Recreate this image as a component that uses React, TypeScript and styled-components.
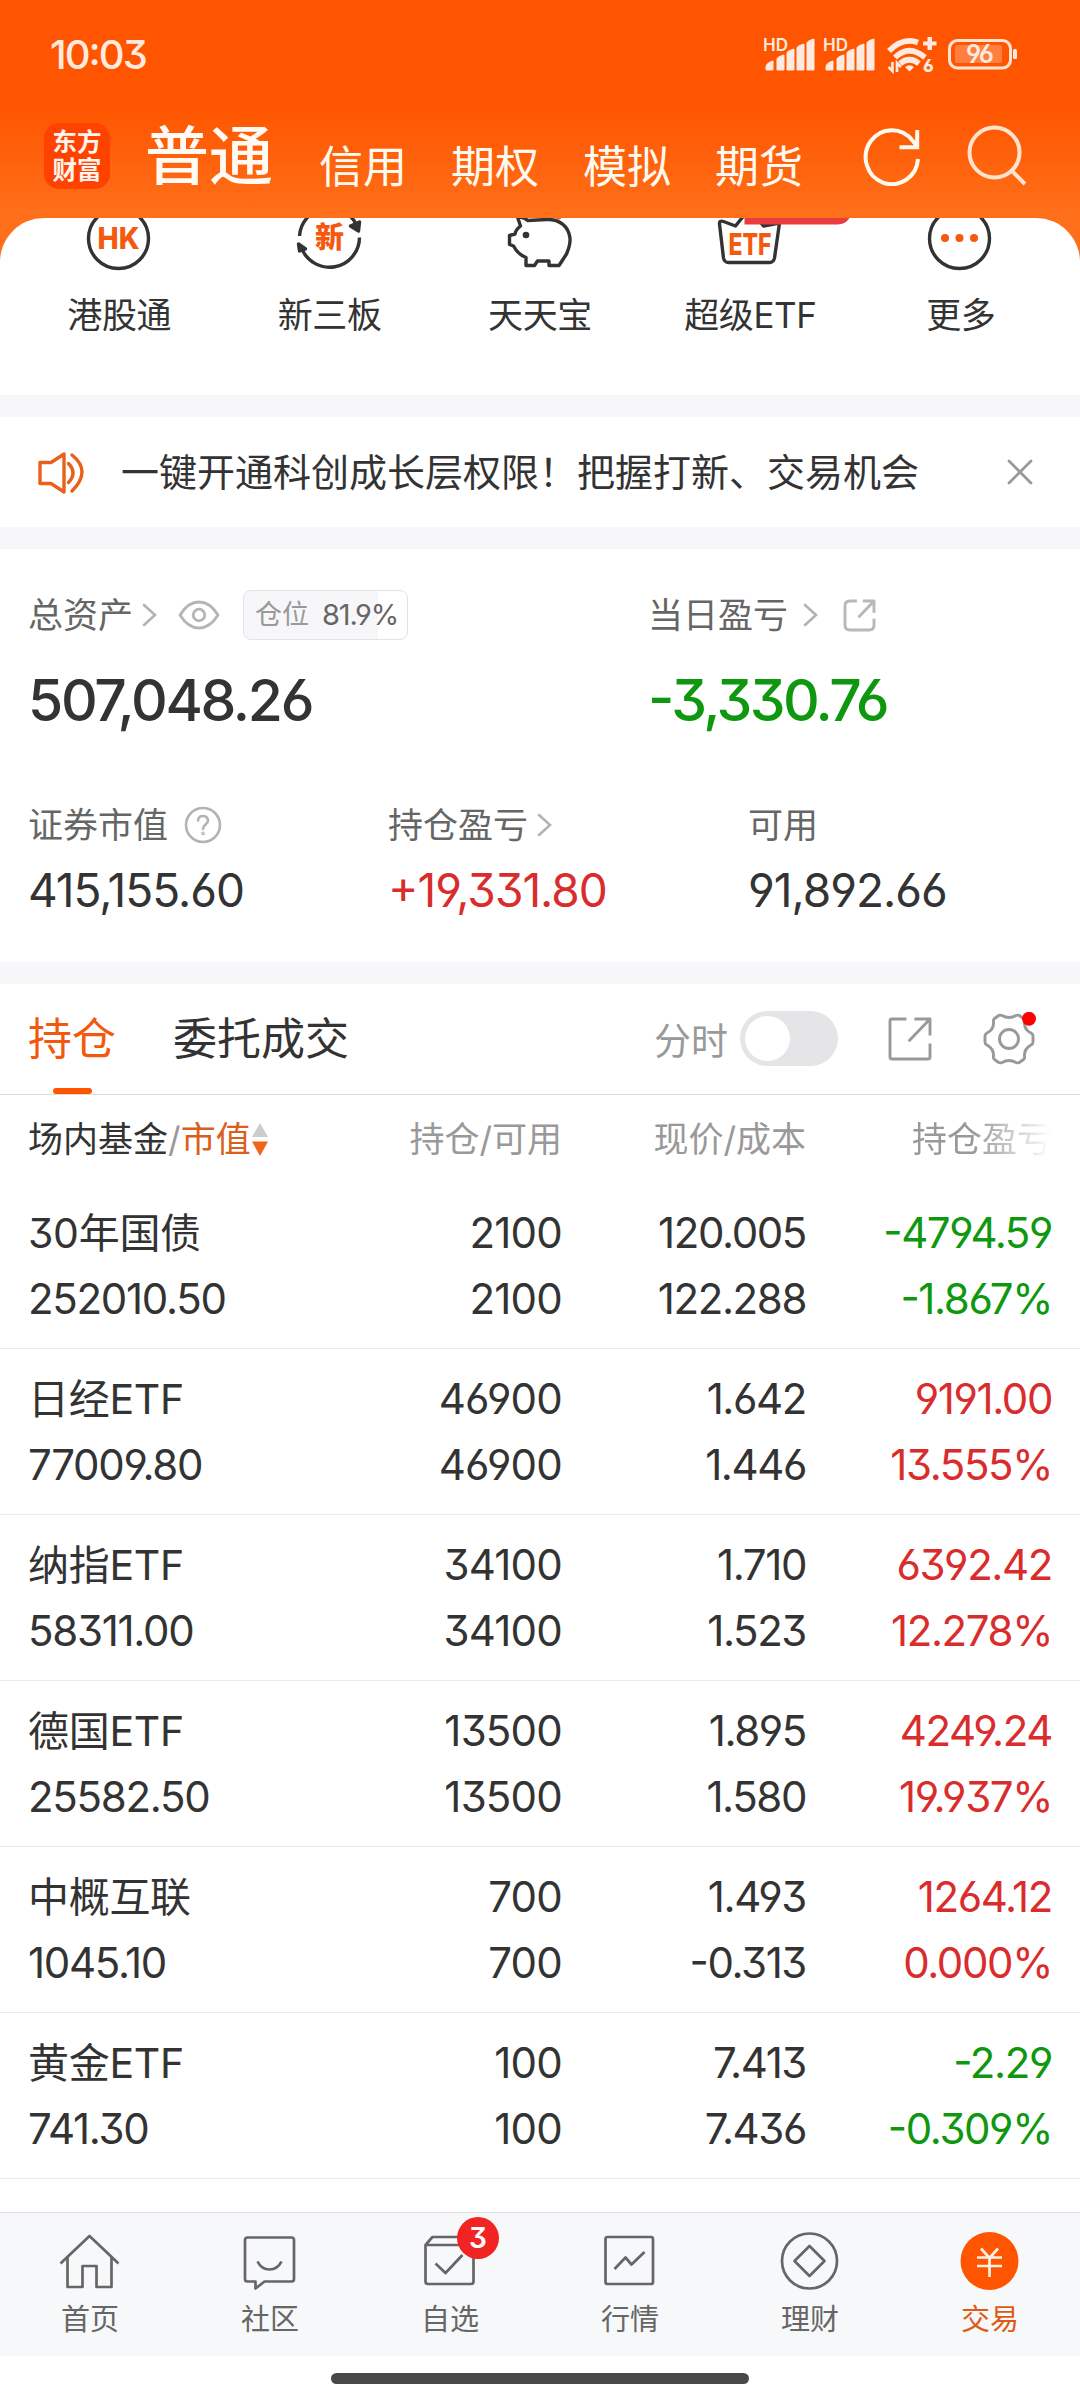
import React from "react";
import styled, { createGlobalStyle } from "styled-components";

const GlobalStyle = createGlobalStyle`
  * { box-sizing: border-box; }
  body {
    margin: 0;
    background: #fff;
    color: #333;
    font-family: "Inter", "Noto Sans CJK SC", sans-serif;
    font-feature-settings: "cv03", "cv04", "cv09", "case";
  }
`;

const Screen = styled.div`
  width: 1080px;
  height: 2400px;
  display: flex;
  flex-direction: column;
  overflow: hidden;
  background: #fff;
`;

const Top = styled.header`
  height: 262px;
  flex: none;
  background: linear-gradient(#ff5500 0, #ff5500 105px, #ff6f19 216px, #ff6f19 262px);
`;

const StatusBar = styled.div`
  height: 109px;
  padding: 0 60px 0 50px;
  display: flex;
  align-items: center;
  justify-content: space-between;
`;

const Clock = styled.span`
  color: #ffeadf;
  font-size: 40px;
  font-weight: 500;
  line-height: 50px;
  letter-spacing: -1.9px;
`;

const HeaderRow = styled.div`
  height: 109px;
  padding: 0 53px 17px 44px;
  display: flex;
  align-items: center;
`;

const Logo = styled.div`
  width: 66px;
  height: 66px;
  margin-top: 2px;
  border-radius: 15px;
  background: #ff4200;
  color: #fff4ee;
  font-size: 24.5px;
  font-weight: 700;
  line-height: 28px;
  text-align: center;
  padding-top: 5px;
`;

const ActiveMode = styled.div`
  margin: 1px 0 0 35px;
  width: 131px;
  color: #fffaf3;
  font-size: 64px;
  font-weight: 500;
  line-height: 70px;
`;

const Modes = styled.nav`
  margin: 24px 0 0 43px;
  display: flex;
  gap: 44px;
`;

const Mode = styled.span`
  color: #fffaf0;
  font-size: 44px;
  line-height: 50px;
`;

const HeaderIcons = styled.div`
  margin-left: auto;
  display: flex;
  gap: 45px;
`;

const Shortcuts = styled.section`
  height: 177px;
  margin-top: -44px;
  flex: none;
  padding: 0 14px;
  border-radius: 44px 44px 0 0;
  background: #fff;
  overflow: hidden;
  display: grid;
  grid-template-columns: repeat(5, 1fr);
`;

const Shortcut = styled.div`
  display: flex;
  flex-direction: column;
  align-items: center;
`;

const ShortcutLabel = styled.span`
  margin-top: 12px;
  font-size: 35px;
  line-height: 50px;
  letter-spacing: -0.4px;
  white-space: nowrap;
`;

const Gap = styled.div`
  height: 22px;
  flex: none;
  background: #f7f7fa;
`;

const Notice = styled.section`
  height: 110px;
  flex: none;
  padding: 0 46px 0 36px;
  display: flex;
  align-items: center;
`;

const NoticeText = styled.span`
  margin-left: 35px;
  flex: 1;
  font-size: 38px;
  line-height: 50px;
`;

const Assets = styled.section`
  height: 413px;
  flex: none;
  padding: 40px 28px 0;
`;

const SummaryRow = styled.div`
  display: grid;
  grid-template-columns: 620px 1fr;
`;

const DetailRow = styled.div`
  margin-top: 63px;
  display: grid;
  grid-template-columns: 360px 360px 1fr;
`;

const Label = styled.div<{ $h: number }>`
  height: ${(p) => p.$h}px;
  display: flex;
  align-items: center;
  color: #666;
  font-size: 35px;
  line-height: 50px;
  white-space: nowrap;
`;

const LabelIcon = styled.span<{ $left: number }>`
  margin-left: ${(p) => p.$left}px;
  display: flex;
`;

const Position = styled.span`
  width: 165px;
  height: 50px;
  margin-left: 23px;
  padding: 0 9px 0 11px;
  display: flex;
  align-items: center;
  justify-content: space-between;
  border: 1px solid #e3e3e6;
  border-radius: 8px;
  background: linear-gradient(90deg, #f7f7fa 82%, #fff 82%);
  color: #999;
  font-size: 27px;
`;

const PositionValue = styled.b`
  color: #666;
  font-size: 29px;
  font-weight: 400;
  letter-spacing: -1.2px;
`;

const tones = { up: "#d92d2d", down: "#0f980f", plain: "#333" };
type Tone = keyof typeof tones;

const Total = styled.div<{ $tone: Tone }>`
  height: 84px;
  margin-top: 18px;
  color: ${(p) => tones[p.$tone]};
  font-size: 57px;
  font-weight: 450;
  line-height: 84px;
  letter-spacing: ${(p) => (p.$tone === "plain" ? -2.3 : -2.6)}px;
`;

const Detail = styled.div<{ $tone: Tone }>`
  margin-top: 16px;
  color: ${(p) => tones[p.$tone]};
  font-size: 46px;
  line-height: 60px;
  letter-spacing: -1px;
`;

const TabBar = styled.div`
  height: 111px;
  flex: none;
  padding: 0 44px 0 28px;
  display: flex;
  align-items: center;
  border-bottom: 1px solid #dcdcdc;
`;

const Tab = styled.div<{ $active?: boolean }>`
  height: 110px;
  margin-right: 57px;
  display: flex;
  flex-direction: column;
  align-items: center;
  color: ${(p) => (p.$active ? "#f2590d" : "#333")};
  font-size: 44px;
  line-height: 110px;
  &::after {
    content: "";
    width: 39px;
    height: 6px;
    margin-top: -6px;
    flex: none;
    border-radius: 3px;
    background: ${(p) => (p.$active ? "#ff5500" : "transparent")};
  }
`;

const Tools = styled.div`
  margin-left: auto;
  display: flex;
  align-items: center;
  color: #999;
  font-size: 37px;
`;

const Switch = styled.span`
  width: 98px;
  height: 55px;
  margin: 0 50px 2px 12px;
  padding: 5px;
  border-radius: 28px;
  background: #e5e5e7;
  &::before {
    content: "";
    display: block;
    width: 45px;
    height: 45px;
    border-radius: 50%;
    background: #fff;
  }
`;

const columns = "262px 272px 244px 1fr";

const TableHead = styled.div`
  height: 88px;
  flex: none;
  padding: 0 28px;
  display: grid;
  grid-template-columns: ${columns};
  align-items: center;
  color: #999;
  font-size: 35px;
  line-height: 50px;
  white-space: nowrap;
`;

const SortHead = styled.span`
  display: flex;
  align-items: center;
`;

const Ink = styled.span<{ $c: string }>`
  color: ${(p) => p.$c};
`;

const HeadCell = styled.span<{ $fade?: boolean }>`
  text-align: right;
  ${(p) => p.$fade && "mask-image: linear-gradient(90deg, #000 68%, rgba(0,0,0,.05) 98%);"}
`;

const Row = styled.div`
  height: 166px;
  flex: none;
  padding: 17px 28px;
  display: grid;
  grid-template-columns: ${columns};
  border-bottom: 1px solid #ebebeb;
`;

const Cell = styled.div<{ $tone?: Tone; $left?: boolean; $spacing?: number }>`
  display: flex;
  flex-direction: column;
  align-items: ${(p) => (p.$left ? "flex-start" : "flex-end")};
  color: ${(p) => tones[p.$tone ?? "plain"]};
  font-size: 42px;
  line-height: 66px;
  letter-spacing: ${(p) => p.$spacing ?? -1.4}px;
  white-space: nowrap;
`;

const Name = styled.span`
  font-size: 41px;
  letter-spacing: -0.3px;
`;

const Spacer = styled.div`
  flex: 1;
`;

const BottomNav = styled.nav`
  height: 144px;
  flex: none;
  display: grid;
  grid-template-columns: repeat(6, 1fr);
  border-top: 1px solid #dfdfe1;
  background: #f7f8fa;
`;

const NavItem = styled.div<{ $active?: boolean }>`
  position: relative;
  padding-top: 15px;
  display: flex;
  flex-direction: column;
  align-items: center;
  color: ${(p) => (p.$active ? "#e05a14" : "#666")};
  font-size: 29px;
  line-height: 51px;
`;

const Badge = styled.span`
  position: absolute;
  left: 97px;
  top: 4px;
  width: 42px;
  height: 42px;
  border-radius: 50%;
  background: #f22323;
  color: #fff;
  font-size: 28px;
  font-weight: 600;
  line-height: 42px;
  text-align: center;
`;

const HomeArea = styled.div`
  height: 44px;
  flex: none;
  padding-top: 17px;
  display: flex;
  justify-content: center;
  &::before {
    content: "";
    width: 418px;
    height: 11px;
    border-radius: 6px;
    background: #484848;
  }
`;

const Signal = ({ x }: { x: number }) => (
  <g transform={`translate(${x} 0)`}>
    <text x="-1" y="26" fontSize="17" fontWeight="600" textLength="25" lengthAdjust="spacingAndGlyphs">HD</text>
    <path d="M2 45v-3q0-4 7-6v9zM13 45v-11q0-2 7-4v15zM23 45v-17q0-2 7-4v21zM33 45v-22q0-2 7-4v26zM43 45v-27q0-2 7-4v31z" strokeWidth="1" strokeLinejoin="round" stroke="#ffeadf" />
  </g>
);

const StatusIcons = () => (
  <svg width="256" height="60" viewBox="0 0 256 60" fill="#ffeadf">
    <Signal x={0} />
    <Signal x={60} />
    <g fill="none" stroke="#ffeadf" strokeWidth="5.6">
      <path d="M125 26Q139 12 154 17.500M131 32.500Q145 19 161 32.500M136 38.500Q145.500 31 155 38.500" />
    </g>
    <path d="M141 42q4.500-3.500 9 0l-4.500 4.500zM163.500 12h4.500v4.500h4.500v4h-4.500v4.500h-4.500v-4.500h-4.500v-4h4.500z" />
    <path d="M128.500 37v9l-4-4M133 47v-9l4 4" fill="none" stroke="#ffeadf" strokeWidth="2.600" />
    <text x="159" y="47" fontSize="17" fontWeight="800">6</text>
    <rect x="185.500" y="15.500" width="61" height="27.500" rx="8" fill="none" stroke="#ffe4d4" strokeWidth="3" />
    <rect x="191" y="20" width="47" height="18" rx="2" fill="#fff" fillOpacity=".25" />
    <rect x="249" y="24" width="4" height="10" rx="1.500" />
    <text x="215" y="38" fontSize="25" fontWeight="600" textAnchor="middle" letterSpacing="-2">96</text>
  </svg>
);

const RefreshIcon = () => (
  <svg width="60" height="62" viewBox="0 0 60 62" fill="none" stroke="#fffaf0" strokeWidth="4">
    <path d="M56 35A26.200 27 0 1 1 50.500 16.500L55 22" />
    <path d="M55.200 6V23.200H37.500" />
  </svg>
);

const SearchIcon = () => (
  <svg width="60" height="62" viewBox="0 0 60 62" fill="none" stroke="#ffe3cc" strokeWidth="4">
    <circle cx="27.500" cy="28.500" r="25" />
    <path d="M45 47L58 60" />
  </svg>
);

const ShortcutIcon = ({ children }: { children: React.ReactNode }) => (
  <svg width="210" height="60" viewBox="-104.5 0 210 60" fill="none" stroke="#333" strokeWidth="3.400" strokeLinejoin="round">
    {children}
  </svg>
);

const glyph = { fill: "#f5590f", stroke: "none", fontWeight: 800, textAnchor: "middle" as const };

const shortcuts = [
  {
    name: "港股通",
    icon: (
      <>
        <circle cx="0" cy="20.500" r="30" />
        <text {...glyph} x="0" y="31" fontSize="30" textLength="42" lengthAdjust="spacingAndGlyphs">HK</text>
      </>
    ),
  },
  {
    name: "新三板",
    icon: (
      <>
        <path d="M-30 18A30 30 0 0 1 26 5M30 19.500A30 30 0 0 1 -28 30" />
        <path d="M30 4L29 13L21 8Z M-31 26L-30 33L-24 31Z" fill="#333" />
        <text {...glyph} x="0" y="30" fontSize="29">新</text>
      </>
    ),
  },
  {
    name: "天天宝",
    icon: (
      <>
        <path d="M-22-1L-19 8Q-24 12-24.500 16L-30 17.500V26.500L-26 28Q-22 36-13.500 39.500V47.500H-5L-2 43H9.500V47.500H19.500L27 36Q31 27 30.500 20C29 8 20 1 7 1.500L-12 2.500Q-15-1-22-1Z" />
        <circle cx="-13.500" cy="17" r="3.300" fill="#333" stroke="none" />
        <circle cx="19" cy="-1.500" r="3" fill="#f5590f" stroke="none" />
      </>
    ),
  },
  {
    name: "超级ETF",
    icon: (
      <>
        <path d="M-6-2L-14 8L-26 3.500Q-30.500 2-30 6L-26 40Q-25 44.500-21 44.500H20Q24 44.500 25 40L30 5L14 8L6-2" />
        <path d="M-5-20H90V-18Q108-12 100 0Q96 6.500 88 6.500H-5Z" fill="#e93c3c" stroke="none" />
        <text {...glyph} x="0.500" y="36.500" fontSize="30" textLength="43" lengthAdjust="spacingAndGlyphs">ETF</text>
      </>
    ),
  },
  {
    name: "更多",
    icon: (
      <>
        <circle cx="-1" cy="20.500" r="30" />
        <g fill="#f5590f" stroke="none">
          <circle cx="-15.500" cy="20" r="4" />
          <circle cx="-1" cy="20" r="4" />
          <circle cx="13.500" cy="20" r="4" />
        </g>
      </>
    ),
  },
];

const SpeakerIcon = () => (
  <svg width="50" height="46" viewBox="0 -1 50 46" fill="none" stroke="#e8601c" strokeWidth="3.400" strokeLinejoin="round" strokeLinecap="round">
    <path d="M4 12.500H15L28 4V42L15 33.500H4Z" />
    <path d="M32.500 13.500Q41.500 23 32.500 32.500M36 5Q56 21 36 41" />
  </svg>
);

const CloseIcon = () => (
  <svg width="28" height="28" viewBox="0 0 28 28" stroke="#999" strokeWidth="2.800" strokeLinecap="round">
    <path d="M3 3L25 25M25 3L3 25" />
  </svg>
);

const Chevron = () => (
  <svg width="16" height="26" viewBox="0 0 16 26" fill="none" stroke="#b3b3b3" strokeWidth="2.600" strokeLinecap="round">
    <path d="M2 3L13 13L2 23" />
  </svg>
);

const EyeIcon = () => (
  <svg width="42" height="32" viewBox="0 0 42 32" fill="none" stroke="#b5b5b5" strokeWidth="2.800">
    <path d="M2 16Q10 3 21 3T40 16Q32 29 21 29T2 16Z" strokeLinejoin="round" />
    <circle cx="21" cy="16" r="5.800" />
  </svg>
);

const HelpIcon = () => (
  <svg width="38" height="38" viewBox="0 0 38 38" fill="none" stroke="#b3b3b3" strokeWidth="2.600" strokeLinecap="round">
    <circle cx="19" cy="19" r="17" />
    <path d="M14 14.500Q14.500 10 19 10T24 14.500C24 18.500 19 18.500 19 23" />
    <circle cx="19" cy="27.300" r=".6" />
  </svg>
);

const ShareIcon = ({ size, radius, color }: { size: number; radius: number; color: string }) => (
  <svg width={size} height={size} viewBox={`0 0 ${size} ${size}`} fill="none" stroke={color} strokeWidth="2.900" strokeLinejoin="round">
    <path
      d={`M${size * 0.42} 2H${2 + radius}Q2 2 2 ${2 + radius}V${size - 2 - radius}Q2 ${size - 2} ${2 + radius} ${size - 2}H${size - 2 - radius}Q${size - 2} ${size - 2} ${size - 2} ${size - 2 - radius}V${size * 0.6}M${size * 0.6} 2H${size - 2}V${size * 0.42}M${size - 2} 2L${size * 0.47} ${size * 0.55}`}
    />
  </svg>
);

const GearIcon = () => (
  <svg width="54" height="54" viewBox="0 0 54 54" fill="none" stroke="#999" strokeWidth="2.900" strokeLinejoin="round">
    <path d="M20 3.500Q27 7.500 34 3.500Q36.500 2.500 38 4L41.500 6.500Q43 7.500 42.500 10Q42 17.500 49 21Q51 22 51 24V30Q51 32 49 33Q42 37 42.500 44Q43 46.500 41.500 47.500L38 50Q36.500 51.500 34 50.500Q27 46.500 20 50.500Q17.500 51.500 16 50L12.500 47.500Q11 46.500 11.500 44Q12 37 5 33Q3 32 3 30V24Q3 22 5 21Q12 17.500 11.500 10Q11 7.500 12.500 6.500L16 4Q17.500 2.500 20 3.500Z" />
    <circle cx="27" cy="27" r="9.500" />
    <circle cx="47" cy="6.800" r="7" fill="#f00" stroke="none" />
  </svg>
);

const SortIcon = () => (
  <svg width="18" height="36" viewBox="0 0 18 36">
    <path d="M9 2L17 16H1Z" fill="#ccc" />
    <path d="M9 35L1 20.500H17Z" fill="#f26419" />
  </svg>
);

const NavIcon = ({ children }: { children: React.ReactNode }) => (
  <svg width="66" height="66" viewBox="-32.5 -33 66 66" fill="none" stroke="#666" strokeWidth="2.700" strokeLinejoin="round">
    {children}
  </svg>
);

const navItems = [
  {
    name: "首页",
    icon: <path d="M-29 2.500L0-25L29 2.500M-22-4V26H-7V5H7V26H22V-4" />,
  },
  {
    name: "社区",
    icon: (
      <>
        <path d="M-22-23.500H22Q24.500-23.500 24.500-21V18Q24.500 20.500 22 20.500H-5L-14 27.500V20.500H-22Q-24.500 20.500-24.500 18V-21Q-24.500-23.500-22-23.500Z" />
        <path d="M-12 .500Q-8 8.500 0 8.500T12 .500" />
      </>
    ),
  },
  {
    name: "自选",
    badge: "3",
    icon: (
      <>
        <path d="M-24-16L-17-24H17L24-16M-24-16H24V20.500Q24 23 21.500 23H-21.500Q-24 23-24 20.500Z" />
        <path d="M-14 2.500L-4 12L13-6" />
      </>
    ),
  },
  {
    name: "行情",
    icon: (
      <>
        <rect x="-24" y="-24" width="47.500" height="47" rx="2" />
        <path d="M-15 8L-4-3.500L2 3.500L15-9" />
      </>
    ),
  },
  {
    name: "理财",
    icon: (
      <>
        <circle cx="0" cy="0" r="27.500" />
        <path d="M0-15L15 0L0 15L-15 0Z" />
      </>
    ),
  },
  {
    name: "交易",
    active: true,
    icon: (
      <>
        <circle cx="0" cy="0" r="29" fill="#ff5500" stroke="none" />
        <path d="M-8.500-12.500L0-3L8.500-12.500M0-4V16M-12.500-3.500H12.500M-12.500 5H12.500" stroke="#fff1e6" />
      </>
    ),
  },
];

type Holding = {
  name: string;
  value: string;
  held: string;
  usable: string;
  price: string;
  cost: string;
  profit: string;
  rate: string;
  tone: Tone;
};

const holdings: Holding[] = [
  { name: "30年国债", value: "252010.50", held: "2100", usable: "2100", price: "120.005", cost: "122.288", profit: "-4794.59", rate: "-1.867%", tone: "down" },
  { name: "日经ETF", value: "77009.80", held: "46900", usable: "46900", price: "1.642", cost: "1.446", profit: "9191.00", rate: "13.555%", tone: "up" },
  { name: "纳指ETF", value: "58311.00", held: "34100", usable: "34100", price: "1.710", cost: "1.523", profit: "6392.42", rate: "12.278%", tone: "up" },
  { name: "德国ETF", value: "25582.50", held: "13500", usable: "13500", price: "1.895", cost: "1.580", profit: "4249.24", rate: "19.937%", tone: "up" },
  { name: "中概互联", value: "1045.10", held: "700", usable: "700", price: "1.493", cost: "-0.313", profit: "1264.12", rate: "0.000%", tone: "up" },
  { name: "黄金ETF", value: "741.30", held: "100", usable: "100", price: "7.413", cost: "7.436", profit: "-2.29", rate: "-0.309%", tone: "down" },
];

export default function App() {
  return (
    <Screen>
      <GlobalStyle />
      <Top>
        <StatusBar>
          <Clock>10:03</Clock>
          <StatusIcons />
        </StatusBar>
        <HeaderRow>
          <Logo>东方<br />财富</Logo>
          <ActiveMode>普通</ActiveMode>
          <Modes>
            {["信用", "期权", "模拟", "期货"].map((m) => (
              <Mode key={m}>{m}</Mode>
            ))}
          </Modes>
          <HeaderIcons>
            <RefreshIcon />
            <SearchIcon />
          </HeaderIcons>
        </HeaderRow>
      </Top>

      <Shortcuts>
        {shortcuts.map((s) => (
          <Shortcut key={s.name}>
            <ShortcutIcon>{s.icon}</ShortcutIcon>
            <ShortcutLabel>{s.name}</ShortcutLabel>
          </Shortcut>
        ))}
      </Shortcuts>
      <Gap />

      <Notice>
        <SpeakerIcon />
        <NoticeText>一键开通科创成长层权限！把握打新、交易机会</NoticeText>
        <CloseIcon />
      </Notice>
      <Gap />

      <Assets>
        <SummaryRow>
          <div>
            <Label $h={52}>
              总资产
              <LabelIcon $left={9}><Chevron /></LabelIcon>
              <LabelIcon $left={20}><EyeIcon /></LabelIcon>
              <Position>仓位 <PositionValue>81.9%</PositionValue></Position>
            </Label>
            <Total $tone="plain">507,048.26</Total>
          </div>
          <div>
            <Label $h={52}>
              当日盈亏
              <LabelIcon $left={15}><Chevron /></LabelIcon>
              <LabelIcon $left={24}><ShareIcon size={33} radius={5} color="#b8b8b8" /></LabelIcon>
            </Label>
            <Total $tone="down">-3,330.76</Total>
          </div>
        </SummaryRow>
        <DetailRow>
          <div>
            <Label $h={38}>证券市值<LabelIcon $left={16}><HelpIcon /></LabelIcon></Label>
            <Detail $tone="plain">415,155.60</Detail>
          </div>
          <div>
            <Label $h={38}>持仓盈亏<LabelIcon $left={9}><Chevron /></LabelIcon></Label>
            <Detail $tone="up">+19,331.80</Detail>
          </div>
          <div>
            <Label $h={38}>可用</Label>
            <Detail $tone="plain">91,892.66</Detail>
          </div>
        </DetailRow>
      </Assets>
      <Gap />

      <TabBar>
        <Tab $active>持仓</Tab>
        <Tab>委托成交</Tab>
        <Tools>
          分时
          <Switch />
          <ShareIcon size={44} radius={2} color="#999" />
          <LabelIcon $left={50}><GearIcon /></LabelIcon>
        </Tools>
      </TabBar>

      <TableHead>
        <SortHead>
          <Ink $c="#333">场内基金</Ink>/<Ink $c="#d9601c">市值</Ink>
          <SortIcon />
        </SortHead>
        <HeadCell>持仓/可用</HeadCell>
        <HeadCell>现价/成本</HeadCell>
        <HeadCell $fade>持仓盈亏</HeadCell>
      </TableHead>

      {holdings.map((h) => (
        <Row key={h.name}>
          <Cell $left $spacing={-1.3}><Name>{h.name}</Name><span>{h.value}</span></Cell>
          <Cell $spacing={-0.8}><span>{h.held}</span><span>{h.usable}</span></Cell>
          <Cell><span>{h.price}</span><span>{h.cost}</span></Cell>
          <Cell $tone={h.tone}><span>{h.profit}</span><span>{h.rate}</span></Cell>
        </Row>
      ))}
      <Spacer />

      <BottomNav>
        {navItems.map((n) => (
          <NavItem key={n.name} $active={n.active}>
            <NavIcon>{n.icon}</NavIcon>
            {n.badge && <Badge>{n.badge}</Badge>}
            {n.name}
          </NavItem>
        ))}
      </BottomNav>
      <HomeArea />
    </Screen>
  );
}
